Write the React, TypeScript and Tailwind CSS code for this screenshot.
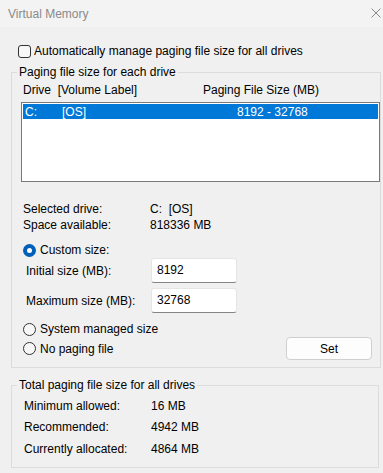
import { useState } from 'react';

const font = 'font-["Segoe_UI","Liberation_Sans",Arial,sans-serif]';

const Radio = ({ checked, label }: { checked?: boolean; label: string }) => (
  <label className="flex items-center gap-[4px] h-[16px]">
    {checked ? (
      <span className="w-[13px] h-[13px] rounded-full bg-[#005fb8] flex items-center justify-center">
        <span className="w-[5px] h-[5px] rounded-full bg-white" />
      </span>
    ) : (
      <span className="w-[13px] h-[13px] rounded-full border border-[#333333] bg-[#f7f7f7]" />
    )}
    <span>{label}</span>
  </label>
);

const SizeField = ({ label, value }: { label: string; value: string }) => (
  <div className="flex items-center h-[25px]">
    <span className="w-[130px] pl-[5px]">{label}</span>
    <div className="w-[86px] h-[25px] bg-white border border-[#e5e5e5] border-b-[#868686] rounded-[3px] pl-[5px] pt-[2px] leading-[18px]">
      {value}
    </div>
  </div>
);

const InfoRow = ({ label, value, h }: { label: string; value: string; h: string }) => (
  <div className={`flex items-center ${h}`}>
    <span className="w-[127px]">{label}</span>
    <span>{value}</span>
  </div>
);

export default function App() {
  const [auto, setAuto] = useState(false);

  return (
    <div className={`w-[383px] h-[473px] overflow-hidden bg-[#f0f0f0] text-[12px] leading-[16px] text-black ${font}`}>
      {/* Title bar */}
      <div className="h-[27px] bg-[#f3f3f3] flex items-center justify-between pl-[8px] pr-[2px]">
        <span className="text-[#8a8a8a] text-[12px]">Virtual Memory</span>
        <svg width="10" height="10" viewBox="0 0 10 10" className="mb-[1px]">
          <path d="M0.5 0.5 L9.5 9.5 M9.5 0.5 L0.5 9.5" stroke="#8a8a8a" strokeWidth="1" />
        </svg>
      </div>

      {/* Auto manage */}
      <label className="flex items-center gap-[3px] ml-[18px] mt-[17px] h-[14px]" onClick={() => setAuto(!auto)}>
        <span className="w-[13px] h-[13px] rounded-[3px] border border-[#333333] bg-[#f7f7f7]" />
        <span>Automatically manage paging file size for all drives</span>
      </label>

      {/* Paging file size for each drive */}
      <fieldset className="ml-[11px] w-[368px] mt-[6px] border border-[#dcdcdc] pl-[9px] pb-[7px]">
        <legend className="-ml-[4px] px-[2px] leading-[16px]">Paging file size for each drive</legend>
        <div className="flex mt-[2px] ml-[2px]">
          <span className="w-[180px]">Drive&nbsp;&nbsp;[Volume Label]</span>
          <span>Paging File Size (MB)</span>
        </div>
        <div className="mt-[4px] w-[359px] h-[80px] bg-white border border-[#7a7a7a] p-[1px]">
          <div className="h-[15px] bg-[#0078d7] text-white flex items-center">
            <span className="w-[39px] pl-[2px]">C:</span>
            <span className="w-[175px]">[OS]</span>
            <span>8192 - 32768</span>
          </div>
        </div>

        <div className="mt-[19px] ml-[2px]">
          <InfoRow label="Selected drive:" value={'C:\u00a0\u00a0[OS]'} h="h-[16px]" />
          <InfoRow label="Space available:" value="818336 MB" h="h-[16px]" />
        </div>

        <div className="mt-[9px] ml-[2px]">
          <Radio checked label="Custom size:" />
        </div>
        <div className="flex flex-col gap-[5px]">
          <SizeField label="Initial size (MB):" value="8192" />
          <SizeField label="Maximum size (MB):" value="32768" />
        </div>

        <div className="mt-[8px] ml-[2px]">
          <Radio label="System managed size" />
        </div>
        <div className="flex items-center justify-between pr-[8px]">
          <div className="ml-[2px]">
            <Radio label="No paging file" />
          </div>
          <button className="w-[86px] h-[23px] bg-[#fdfdfd] border border-[#d0d0d0] rounded-[4px] leading-[20px]">
            Set
          </button>
        </div>
      </fieldset>

      {/* Total paging file size */}
      <fieldset className="ml-[11px] w-[368px] mt-[9px] border border-[#dcdcdc] pl-[12px] pt-[2px] pb-[8px]">
        <legend className="-ml-[7px] px-[2px] leading-[16px]">Total paging file size for all drives</legend>
        <InfoRow label="Minimum allowed:" value="16 MB" h="h-[21px]" />
        <InfoRow label="Recommended:" value="4942 MB" h="h-[22px]" />
        <InfoRow label="Currently allocated:" value="4864 MB" h="h-[21px]" />
      </fieldset>
    </div>
  );
}
